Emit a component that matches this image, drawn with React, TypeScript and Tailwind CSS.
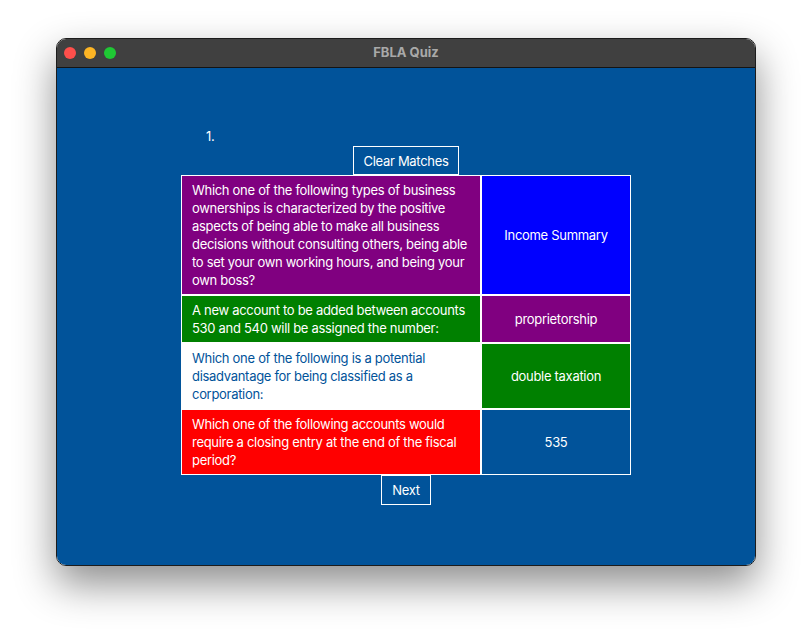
import React from "react";

const font = { fontFamily: "Inter, 'Noto Sans', sans-serif" };

function Lines({ lines }: { lines: string[] }) {
  return (
    <>
      {lines.map((l, i) => (
        <span key={i} className="block whitespace-nowrap">
          {l}
        </span>
      ))}
    </>
  );
}

export default function App() {
  return (
    <div className="w-[812px] h-[640px] bg-white pt-[38px] pl-[56px]" style={font}>
      <div className="w-[700px] h-[528px] rounded-[10px] overflow-hidden border border-[#1c1c1c] shadow-[0_18px_40px_rgba(0,0,0,0.45)] flex flex-col">
        <div className="h-[29px] bg-[#404040] border-b border-[#141414] flex items-center relative shrink-0">
          <div className="flex items-center gap-[8px] pl-[7px]">
            <span className="w-[12px] h-[12px] rounded-full bg-[#fe4f4b]" />
            <span className="w-[12px] h-[12px] rounded-full bg-[#fdb524]" />
            <span className="w-[12px] h-[12px] rounded-full bg-[#1fc834]" />
          </div>
          <div className="absolute inset-0 flex items-center justify-center text-[13px] font-bold text-[#a9a9a9]">
            FBLA Quiz
          </div>
        </div>
        <div className="flex-1 bg-[#01539a] flex flex-col items-center text-white text-[13px] leading-[18px] tracking-[-0.3px]">
          <div className="w-full pl-[149px] pt-[59px] h-[78px]">1.</div>
          <div className="w-[106px] h-[29px] border border-white flex items-center justify-center">
            Clear Matches
          </div>
          <div className="grid grid-cols-[300px_150px]">
            <div className="h-[120px] border border-white bg-[#800080] px-[10px] py-[5px]">
              <Lines
                lines={[
                  "Which one of the following types of business",
                  "ownerships is characterized by the positive",
                  "aspects of being able to make all business",
                  "decisions without consulting others, being able",
                  "to set your own working hours, and being your",
                  "own boss?",
                ]}
              />
            </div>
            <div className="h-[120px] border border-white bg-[#0000ff] flex items-center justify-center">
              Income Summary
            </div>
            <div className="h-[48px] border border-white bg-[#008000] px-[10px] py-[5px]">
              <Lines
                lines={[
                  "A new account to be added between accounts",
                  "530 and 540 will be assigned the number:",
                ]}
              />
            </div>
            <div className="h-[48px] border border-white bg-[#800080] flex items-center justify-center">
              proprietorship
            </div>
            <div className="h-[66px] border border-white bg-white text-[#01539a] px-[10px] py-[5px]">
              <Lines
                lines={[
                  "Which one of the following is a potential",
                  "disadvantage for being classified as a",
                  "corporation:",
                ]}
              />
            </div>
            <div className="h-[66px] border border-white bg-[#008000] flex items-center justify-center">
              double taxation
            </div>
            <div className="h-[66px] border border-white bg-[#ff0000] px-[10px] py-[5px]">
              <Lines
                lines={[
                  "Which one of the following accounts would",
                  "require a closing entry at the end of the fiscal",
                  "period?",
                ]}
              />
            </div>
            <div className="h-[66px] border border-white bg-[#01539a] flex items-center justify-center">
              535
            </div>
          </div>
          <div className="w-[50px] h-[30px] border border-white flex items-center justify-center">
            Next
          </div>
        </div>
      </div>
    </div>
  );
}
